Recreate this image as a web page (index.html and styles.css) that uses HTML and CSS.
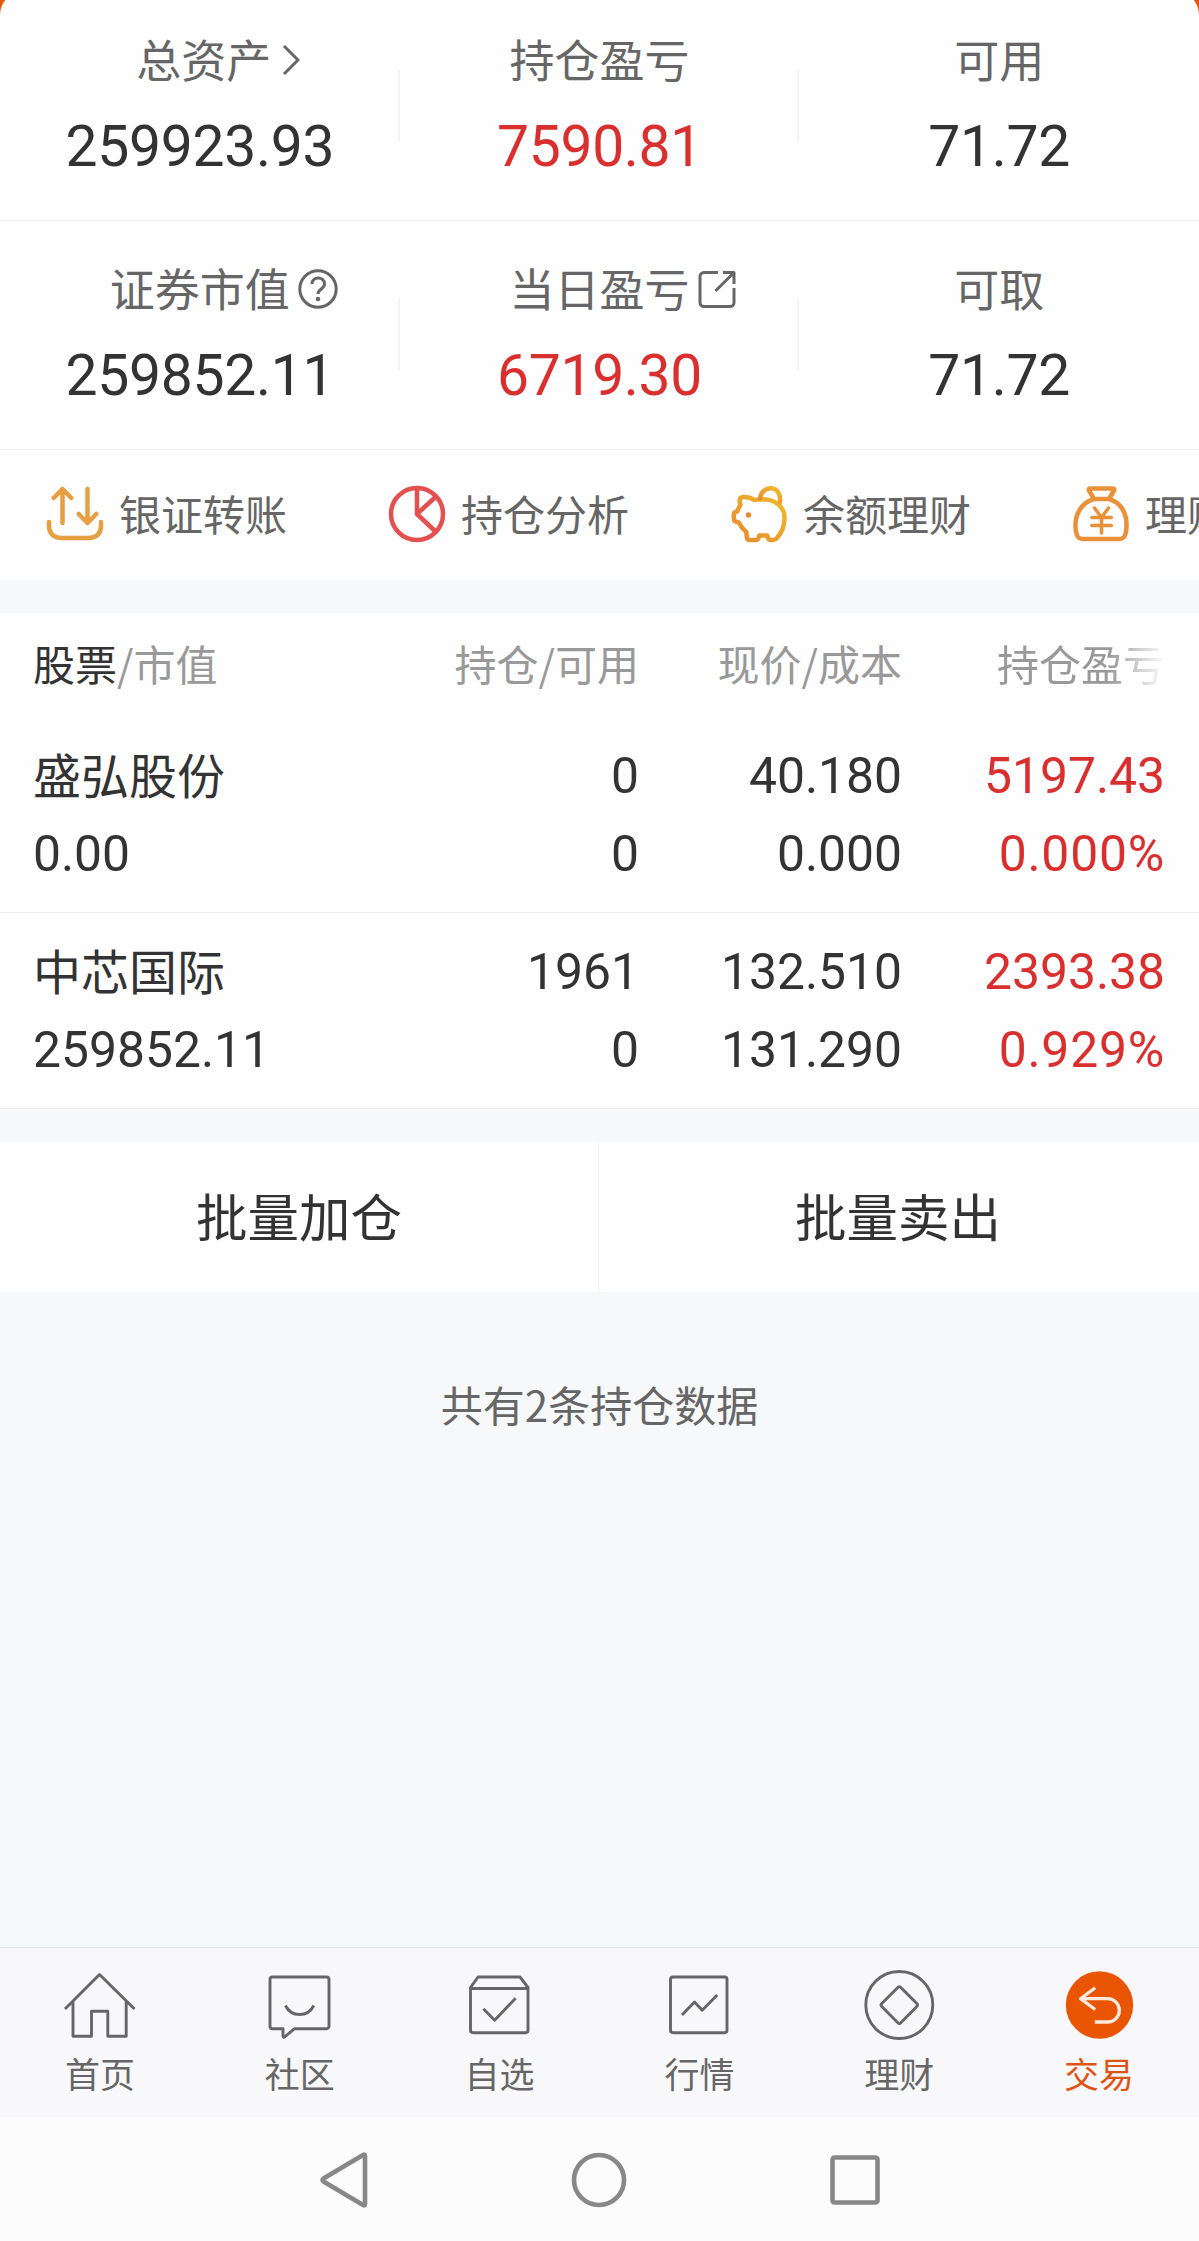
FILE: index.html
```html
<!DOCTYPE html>
<html lang="zh-CN">
<head>
	<meta charset="UTF-8">
	<meta name="viewport" content="width=device-width, initial-scale=1.0">
	<title>持仓</title>
	<link rel="stylesheet" href="styles.css">
</head>
<body>

	<div class="top">
		<!-- Account summary -->
		<section class="summary">
			<div class="summary-row">
				<div class="cell">
					<div class="label"><span class="label-text shifted">总资产<svg class="chevron" viewBox="0 0 18 32"><path d="M2 2l14 14L2 30"/></svg></span></div>
					<div class="value">259923.93</div>
				</div>
				<div class="cell">
					<div class="label">持仓盈亏</div>
					<div class="value red">7590.81</div>
				</div>
				<div class="cell">
					<div class="label">可用</div>
					<div class="value">71.72</div>
				</div>
			</div>
			<div class="summary-row">
				<div class="cell">
					<div class="label"><span class="label-text">证券市值<svg class="label-icon" viewBox="0 0 40 40"><circle cx="20" cy="20" r="18.2"/><path d="M14 15c0-8 12.5-8 12.5 0 0 5-6.5 5-6.5 10"/><circle class="dot" cx="20" cy="30" r="2.3"/></svg></span></div>
					<div class="value">259852.11</div>
				</div>
				<div class="cell">
					<div class="label"><span class="label-text">当日盈亏<svg class="label-icon" viewBox="0 0 40 40"><path d="M21 3.5H7a4 4 0 0 0-4 4v26a4 4 0 0 0 4 4h26a4 4 0 0 0 4-4V19M26 3.5h11V15M37 3.5L18.5 22"/></svg></span></div>
					<div class="value red">6719.30</div>
				</div>
				<div class="cell">
					<div class="label">可取</div>
					<div class="value">71.72</div>
				</div>
			</div>
		</section>

		<nav class="shortcuts">
			<a class="shortcut">
				<svg class="shortcut-icon amber" viewBox="0 0 60 60"><path d="M17.5 38V4M8.7 13l8.8-9 8.8 9M42.5 4v34M33.7 29l8.8 9 8.8-9M4 37v3q0 13 13 13h26q13 0 13-13v-3"/></svg>
				<span>银证转账</span>
			</a>
			<a class="shortcut">
				<svg class="shortcut-icon rose" viewBox="0 0 60 60"><circle cx="30" cy="29" r="26"/><path d="M30 3v26l18.500 17.5M30 29l18-16.5"/></svg>
				<span>持仓分析</span>
			</a>
			<a class="shortcut">
				<svg class="shortcut-icon" viewBox="0 0 60 60">
					<defs>
						<linearGradient id="gold" x1="0" y1="1" x2="1" y2="0">
							<stop offset="0" stop-color="#e68a2e"/>
							<stop offset="1" stop-color="#f0bb2c"/>
						</linearGradient>
					</defs>
					<g stroke="url(#gold)">
						<path d="M11.5 20q-2.500-7 2-7.800 6-1 12 2.800c18-3.500 30 5 30 18 0 8-3 15-7.500 20q-1.500 2-4 2h-2.500q-2 0-2.500-2l-.7-2.500h-8l-.8 2.500q-.5 2-2.500 2h-6.500q-2.500 0-2.700-3l-.5-5q-4.500-3.500-7.500-9.500-5-.5-5-4v-4q0-2.500 3.700-3 .5-3 3-6.500z"/>
						<path d="M31 13.500C33-1 53-.5 51 17"/>
					</g>
					<circle cx="19.500" cy="30" r="2.700" fill="#e68a2e" stroke="none"/>
				</svg>
				<span>余额理财</span>
			</a>
			<a class="shortcut">
				<svg class="shortcut-icon orange" viewBox="0 0 60 60"><path d="M19.500 3.500h22q2.500 0 1.500 2l-5 8.500H23L18 5.500q-1-2 1.500-2zM23 14C9 18 4 31 4.500 42q.3 7 2.500 10 1.500 2 4 2h38q2.500 0 4-2 2.200-3 2.500-10C56 31 52 18 38 14"/><path class="thin" d="M23.500 23l7 9.500 7-9.500M20.800 32.500h19.500M20.800 40.500h19.500M30.500 32.500V48"/></svg>
				<span>理财商城</span>
			</a>
		</nav>
	</div>

	<!-- Holdings table -->
	<section class="holdings">
		<div class="holdings-head">
			<div><b>股票</b>/市值</div>
			<div>持仓/可用</div>
			<div>现价/成本</div>
			<div class="faded">持仓盈亏</div>
		</div>
		<div class="holding">
			<div class="name">盛弘股份</div>
			<div>0</div>
			<div>40.180</div>
			<div class="red">5197.43</div>
			<div>0.00</div>
			<div>0</div>
			<div>0.000</div>
			<div class="red percent">0.000%</div>
		</div>
		<div class="holding">
			<div class="name">中芯国际</div>
			<div>1961</div>
			<div>132.510</div>
			<div class="red">2393.38</div>
			<div>259852.11</div>
			<div>0</div>
			<div>131.290</div>
			<div class="red percent">0.929%</div>
		</div>
	</section>

	<div class="batch">
		<button type="button">批量加仓</button>
		<button type="button">批量卖出</button>
	</div>

	<p class="count">共有2条持仓数据</p>

	<!-- App tabs -->
	<nav class="tabs">
		<a class="tab">
			<svg viewBox="0 0 72 80"><path d="M1 44L35.500 9.500 70.500 44M9 36v35.300h18.500v-25h16.300v25h18.400V36"/></svg>
			<span>首页</span>
		</a>
		<a class="tab">
			<svg viewBox="0 0 72 80"><path d="M8.500 12h54a2.500 2.500 0 0 1 2.500 2.500v46.700a2.500 2.500 0 0 1-2.500 2.500H30.500l-9.500 8q-2 1.500-2-1v-7H8.500a2.500 2.500 0 0 1-2.500-2.500V14.500A2.500 2.500 0 0 1 8.500 12z"/><path d="M21.400 40.500q4.500 9 14.200 9t14.200-9"/></svg>
			<span>社区</span>
		</a>
		<a class="tab">
			<svg viewBox="0 0 72 80"><path d="M6.500 22.500L14 12h42l8 10.500v42.700a2.500 2.500 0 0 1-2.500 2.500H9a2.500 2.500 0 0 1-2.500-2.500zM6.500 23.500H64M19.400 43.700l11.200 11.600 21-22"/></svg>
			<span>自选</span>
		</a>
		<a class="tab">
			<svg viewBox="0 0 72 80"><rect x="7.500" y="12" width="56.500" height="55.700" rx="2.500"/><path d="M19 50l12.500-13 7.700 8.300L54.200 30"/></svg>
			<span>行情</span>
		</a>
		<a class="tab">
			<svg viewBox="0 0 72 80"><circle cx="36.300" cy="40" r="33.500"/><path d="M34.800 22.500q1.500-1.500 3 0l16 16q1.500 1.500 0 3l-16 16.200q-1.500 1.500-3 0l-16-16.200q-1.500-1.500 0-3z"/></svg>
			<span>理财</span>
		</a>
		<a class="tab active">
			<svg viewBox="0 0 72 80"><circle class="disc" cx="36.500" cy="40" r="33.700"/><path d="M32.200 22.700L17.500 33.700l14.700 10.800M17.500 33.700h27.200a11.650 11.650 0 0 1 0 23.300H31.800"/></svg>
			<span>交易</span>
		</a>
	</nav>

	<!-- System navigation -->
	<div class="system-nav">
		<svg viewBox="0 0 60 60"><path d="M52 6v48q0 2-2 1L10.500 31.500q-2-1.500 0-3L50 5q2-1 2 1z"/></svg>
		<svg viewBox="0 0 60 60"><circle cx="30" cy="30" r="25"/></svg>
		<svg viewBox="0 0 60 60"><rect x="7.500" y="7.500" width="45" height="45" rx="2"/></svg>
	</div>

</body>
</html>
```
FILE: styles.css
```css
* {
	box-sizing: border-box;
}
body {
	margin: 0;
	width: 1199px;
	height: 2241px;
	overflow: hidden;
	display: flex;
	flex-direction: column;
	background-color: #f6f8fa;
	color: #333;
	font-family: "Noto Sans CJK SC", sans-serif;
}
svg {
	display: block;
	fill: none;
	stroke: currentColor;
	stroke-linejoin: round;
}
.red {
	color: #d9302f;
}

/* account summary */
.top {
	height: 580px;
	background-color: #ea5504;
	overflow: hidden;
}
.summary {
	margin-top: -9px;
	padding-top: 9px;
	border-radius: 24px 24px 0 0;
	background-color: #fefefe;
}
.summary-row {
	display: grid;
	grid-template-columns: repeat(3, 1fr);
	height: 229px;
	border-bottom: 1px solid #f0f0f1;
}
.summary-row:first-child {
	height: 221px;
}
.summary-row:first-child .cell {
	padding-top: 29px;
}
.cell {
	padding-top: 37px;
	text-align: center;
	background: linear-gradient(#f4f4f5, #f4f4f5) no-repeat right 78px / 2px 72px;
}
.summary-row:first-child .cell {
	background-position: right 70px;
}
.summary-row .cell:last-child {
	background: none;
}
.label {
	height: 60px;
	line-height: 60px;
	font-size: 45px;
	color: #666;
}
.label-text {
	position: relative;
}
.label-text.shifted {
	left: 4px;
}
.chevron {
	position: absolute;
	left: 146px;
	top: 18px;
	width: 18px;
	height: 32px;
	stroke-width: 3;
}
.label-icon {
	position: absolute;
	left: 188px;
	top: 14px;
	width: 40px;
	height: 40px;
	stroke-width: 3;
}
.label-icon .dot {
	fill: currentColor;
	stroke: none;
}
.value {
	margin-top: 25px;
	line-height: 66px;
	font-family: Roboto, sans-serif;
	font-size: 57px;
	letter-spacing: -0.3px;
}

/* shortcuts */
.shortcuts {
	display: flex;
	gap: 100px;
	height: 130px;
	padding-left: 45px;
	background-color: #fefefe;
}
.shortcut {
	display: flex;
	flex: none;
	align-items: center;
	gap: 14px;
	font-size: 42px;
	line-height: 56px;
	color: #666;
}
.shortcut span {
	padding-bottom: 4px;
}
.shortcut-icon {
	width: 60px;
	height: 60px;
	stroke-width: 4.5;
	stroke-linecap: round;
}
.shortcut-icon .thin {
	stroke-width: 3.5;
}
.amber {
	color: #e69f42;
}
.rose {
	color: #e44f50;
}
.orange {
	color: #e8913a;
}

/* holdings */
.holdings {
	margin-top: 33px;
	background-color: #fefefe;
}
.holdings-head,
.holding {
	display: grid;
	grid-template-columns: 342px 264px 263px 263px;
	padding: 0 33px;
	text-align: right;
}
.holdings-head {
	height: 104px;
	font-size: 42px;
	line-height: 99px;
	color: #999;
}
.holdings-head b {
	font-weight: 400;
	color: #333;
}
.holdings-head .faded {
	-webkit-mask-image: linear-gradient(to left, transparent, #000 56px);
	mask-image: linear-gradient(to left, transparent, #000 56px);
}
.holding {
	align-content: start;
	height: 196px;
	padding-top: 20px;
	border-bottom: 1px solid #efeff0;
	font-family: Roboto, sans-serif;
	font-size: 49.8px;
	line-height: 78px;
}
.holding .name {
	height: 78px;
	font-family: "Noto Sans CJK SC", sans-serif;
	font-size: 48px;
	line-height: 72px;
}
.holding .percent {
	letter-spacing: 0.8px;
}
.holdings-head div:first-child,
.holding div:nth-child(4n + 1) {
	text-align: left;
}

/* batch actions */
.batch {
	display: flex;
	height: 150px;
	margin-top: 33px;
	padding-right: 2px;
	background-color: #fefefe;
}
.batch button {
	flex: 1;
	padding: 0 0 6px;
	border: none;
	background: none;
	font-family: inherit;
	font-size: 51.5px;
	color: #333;
}
.batch button + button {
	border-left: 1px solid #f4f5f7;
}
.count {
	margin: 82px 0 0;
	text-align: center;
	font-size: 42px;
	line-height: 60px;
	color: #666;
}

/* app tabs */
.tabs {
	display: grid;
	grid-template-columns: repeat(6, 1fr);
	height: 170px;
	margin-top: auto;
	padding-top: 17px;
	border-top: 1px solid #e4e5e7;
	background-color: #f8f8fb;
}
.tab {
	display: flex;
	flex-direction: column;
	align-items: center;
	gap: 6px;
	font-size: 35px;
	line-height: 44px;
	color: #666;
}
.tab svg {
	width: 72px;
	height: 80px;
	stroke-width: 2.9;
}
.tab.active {
	color: #dc5518;
}
.tab.active svg {
	stroke: #ffeadb;
	stroke-width: 3.3;
}
.tab.active .disc {
	fill: #ea5504;
	stroke: none;
}

/* system navigation */
.system-nav {
	display: flex;
	justify-content: center;
	gap: 196px;
	height: 124px;
	padding: 33px 2px 0 0;
	background-color: #fcfcfc;
	color: #888;
}
.system-nav svg {
	width: 60px;
	height: 60px;
	stroke-width: 4.6;
}
```
